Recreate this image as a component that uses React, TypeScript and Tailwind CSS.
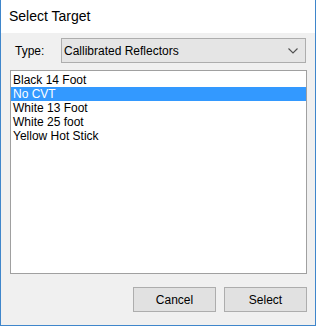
import { useState } from 'react';

const targets = ['Black 14 Foot', 'No CVT', 'White 13 Foot', 'White 25 foot', 'Yellow Hot Stick'];

function Chevron() {
  return (
    <svg width="10" height="6" viewBox="0 0 10 6" fill="none">
      <path d="M0.5 0.5 L5 5 L9.5 0.5" stroke="#505050" strokeWidth="1.1" />
    </svg>
  );
}

export default function App() {
  const [selected, setSelected] = useState(1);

  return (
    <div
      className="flex h-[326px] w-[316px] flex-col border-x border-b border-[#3f86cb] text-black"
      style={{ fontFamily: '"Liberation Sans", Arial, sans-serif' }}
    >
      <div className="flex h-[33px] items-center bg-white pl-[8px] text-[14px]">Select Target</div>

      <div className="flex flex-1 flex-col bg-[#f0f0f0] pt-[5px] text-[12px]">
        <div className="flex items-center pl-[14px] pr-[9px]">
          <span>Type:</span>
          <div className="ml-auto flex h-[25px] w-[245px] items-center justify-between border border-[#adadad] bg-[#e5e5e5] pl-[2px] pr-[7px]">
            <span>Callibrated Reflectors</span>
            <Chevron />
          </div>
        </div>

        <div className="mt-[7px] ml-[9px] h-[204px] w-[297px] border border-[#a0a0a0] bg-white pt-[2px]">
          {targets.map((t, i) => (
            <div
              key={t}
              onClick={() => setSelected(i)}
              className={
                'flex h-[14px] items-center pl-[2px] leading-[14px] ' +
                (i === selected ? 'bg-[#3399ff] text-white' : '')
              }
            >
              {t}
            </div>
          ))}
        </div>

        <div className="mt-[13px] flex justify-end gap-[8px] pr-[8px]">
          <button className="h-[25px] w-[83px] border border-[#adadad] bg-[#e1e1e1]">Cancel</button>
          <button className="h-[25px] w-[83px] border border-[#adadad] bg-[#e1e1e1]">Select</button>
        </div>
      </div>
    </div>
  );
}
